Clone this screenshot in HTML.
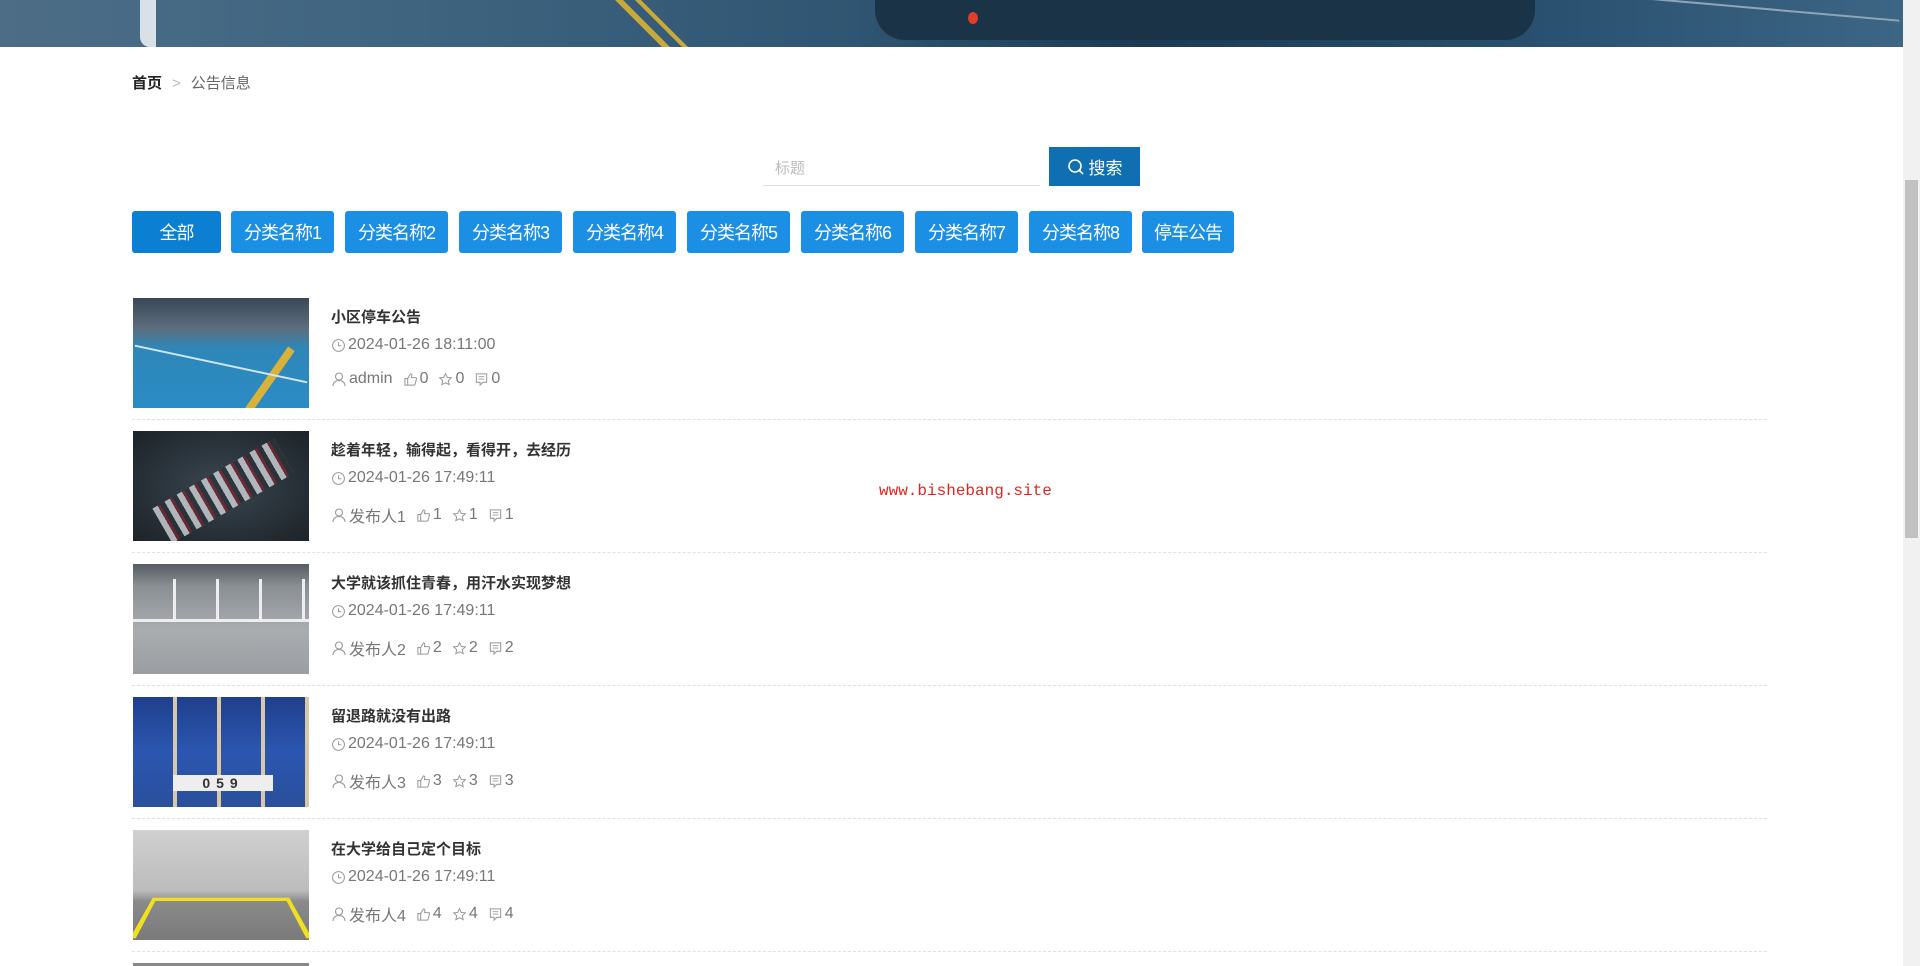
<!DOCTYPE html>
<html><head><meta charset="utf-8"><style>
*{margin:0;padding:0;box-sizing:border-box}
html,body{width:1920px;height:966px;overflow:hidden}
body{background:#fff;font-family:"Liberation Sans","Noto Sans CJK SC",sans-serif;position:relative}
.banner{position:absolute;left:0;top:0;width:1903px;height:47px;background:linear-gradient(90deg,#4d6d86 0%,#3f6581 20%,#2f5572 45%,#1c3a52 60%,#28506e 80%,#3d6684 100%);overflow:hidden}
.banner i{position:absolute;display:block}
.sb{position:absolute;right:0;top:0;width:17px;height:966px;background:#f1f1f1}
.sb .th{position:absolute;left:2px;width:13px;top:180px;height:358px;background:#c1c1c1}
.bc{position:absolute;left:132px;top:72px;font-size:15px;color:#333}
.bc b{font-weight:bold;color:#222}
.bc span{color:#bbb;margin:0 10px}
.bc em{font-style:normal;color:#666}
.inp{position:absolute;left:763px;top:147px;width:277px;height:39px;border-bottom:1px solid #ddd;font-size:15px;color:#bbb;padding:10px 0 0 12px}
.btn{position:absolute;left:1049px;top:147px;width:91px;height:39px;background:#0f6fb0;color:#fff;font-size:17px;display:flex;align-items:center;justify-content:center;gap:4px}
.cat{position:absolute;top:211px;height:42px;background:#1a8fe3;color:#fff;font-size:18px;border-radius:3px;display:flex;align-items:center;justify-content:center;letter-spacing:-1px}
.item{position:absolute;left:132px;width:1635px;height:133px}
.item .im{position:absolute;left:1px;top:0;width:176px;height:110px;overflow:hidden}
.item .t{position:absolute;left:199px;top:8px;font-size:15px;font-weight:bold;color:#333}
.item .d{position:absolute;left:199px;top:38px;font-size:16px;color:#777;display:flex;align-items:center;gap:2px}
.item .m{position:absolute;left:199px;top:72px;font-size:16px;color:#777;display:flex;align-items:center}
.item .m span{margin-right:10px;display:flex;align-items:center;gap:2px}
.item .ln{position:absolute;left:0;top:121px;width:1635px;border-top:1px dashed #e0e0e0}
svg{display:block}
.wm{position:absolute;left:879px;top:482px;font-family:"Liberation Mono",monospace;font-size:16px;color:#e0261f}
</style></head><body>
<div class="banner">
<i style="left:140px;top:0;width:16px;height:47px;background:#d8e0e8;border-radius:0 0 0 10px"></i>
<i style="left:615px;top:0;width:8px;height:60px;background:#c8a93a;transform:skewX(45deg);transform-origin:top"></i>
<i style="left:635px;top:0;width:6px;height:60px;background:#c8a93a;transform:skewX(45deg);transform-origin:top"></i>
<i style="left:875px;top:0;width:660px;height:40px;background:#1a3347;border-radius:0 0 30px 30px"></i>
<i style="left:968px;top:12px;width:10px;height:12px;background:#e23c2a;border-radius:50%"></i>
<i style="left:1540px;top:4px;width:360px;height:2px;background:#8fa6b8;transform:rotate(5deg)"></i>
</div>
<div class="sb"><div class="th"></div></div>

<div class="bc"><b>首页</b><span>&gt;</span><em>公告信息</em></div>
<div class="inp">标题</div>
<div class="btn"><svg width="18" height="18" viewBox="0 0 18 18"><circle cx="8" cy="8" r="6" fill="none" stroke="#fff" stroke-width="1.6"/><path d="M12.5 12.5L16 16" stroke="#fff" stroke-width="1.6"/></svg>搜索</div>

<div class="cat" style="left:132px;width:89px;background:#0b7fd1">全部</div>
<div class="cat" style="left:231px;width:103px">分类名称1</div>
<div class="cat" style="left:345px;width:103px">分类名称2</div>
<div class="cat" style="left:459px;width:103px">分类名称3</div>
<div class="cat" style="left:573px;width:103px">分类名称4</div>
<div class="cat" style="left:687px;width:103px">分类名称5</div>
<div class="cat" style="left:801px;width:103px">分类名称6</div>
<div class="cat" style="left:915px;width:103px">分类名称7</div>
<div class="cat" style="left:1029px;width:103px">分类名称8</div>
<div class="cat" style="left:1142px;width:92px">停车公告</div>

<div class="wm">www.bishebang.site</div>

<div class="item" style="top:298px">
<div class="im" style="background:linear-gradient(180deg,#3a4756 0%,#5d6e7e 28%,#2f86b8 45%,#2a8cc4 100%)"><div style="position:absolute;left:120px;top:40px;width:8px;height:120px;background:#d9b23a;transform:rotate(35deg)"></div><div style="position:absolute;left:0;top:65px;width:176px;height:2px;background:#cfe6f5;transform:rotate(12deg)"></div></div>
<div class="t">小区停车公告</div>
<div class="d">CLK2024-01-26 18:11:00</div>
<div class="m"><span>USRadmin</span><span>THU0</span><span>STR0</span><span>CMT0</span></div>
<div class="ln"></div></div>

<div class="item" style="top:431px">
<div class="im" style="background:radial-gradient(ellipse at 50% 50%,#3a4650,#1c2328)"><div style="position:absolute;left:20px;top:40px;width:140px;height:40px;background:repeating-linear-gradient(90deg,#cfd6dc 0 6px,#7b2530 6px 9px,#2a3238 9px 14px);transform:rotate(-30deg);opacity:.8"></div></div>
<div class="t">趁着年轻，输得起，看得开，去经历</div>
<div class="d">CLK2024-01-26 17:49:11</div>
<div class="m"><span>USR发布人1</span><span>THU1</span><span>STR1</span><span>CMT1</span></div>
<div class="ln"></div></div>

<div class="item" style="top:564px">
<div class="im" style="background:linear-gradient(180deg,#555b61 0%,#8a8f94 20%,#a9adb0 60%,#9a9ea2 100%)"><div style="position:absolute;left:0;top:55px;width:176px;height:3px;background:#eee"></div><div style="position:absolute;left:0;top:15px;width:176px;height:40px;background:repeating-linear-gradient(90deg,transparent 0 40px,#eee 40px 43px)"></div></div>
<div class="t">大学就该抓住青春，用汗水实现梦想</div>
<div class="d">CLK2024-01-26 17:49:11</div>
<div class="m"><span>USR发布人2</span><span>THU2</span><span>STR2</span><span>CMT2</span></div>
<div class="ln"></div></div>

<div class="item" style="top:697px">
<div class="im" style="background:linear-gradient(180deg,#1f3f8c 0%,#2b56b0 50%,#2a4f9c 100%)"><div style="position:absolute;left:0;top:0;width:176px;height:110px;background:repeating-linear-gradient(90deg,transparent 0 40px,#d9c8a8 40px 44px)"></div><div style="position:absolute;left:40px;top:78px;width:100px;height:16px;background:#eee;color:#333;font:bold 14px 'Liberation Sans';text-align:center;letter-spacing:6px">059</div></div>
<div class="t">留退路就没有出路</div>
<div class="d">CLK2024-01-26 17:49:11</div>
<div class="m"><span>USR发布人3</span><span>THU3</span><span>STR3</span><span>CMT3</span></div>
<div class="ln"></div></div>

<div class="item" style="top:830px">
<div class="im" style="background:linear-gradient(180deg,#d0d0d0 0%,#bcbcbc 55%,#8a8a8a 65%,#7a7a7a 100%)"><div style="position:absolute;left:10px;top:62px;width:156px;height:46px;border:5px solid #f0e020;border-bottom:none;transform:perspective(80px) rotateX(30deg)"></div></div>
<div class="t">在大学给自己定个目标</div>
<div class="d">CLK2024-01-26 17:49:11</div>
<div class="m"><span>USR发布人4</span><span>THU4</span><span>STR4</span><span>CMT4</span></div>
<div class="ln"></div></div>

<div class="item" style="top:963px;height:3px;overflow:hidden"><div class="im" style="background:#888;height:3px"></div></div>

<script>
var I={
CLK:'<svg width="15" height="15" viewBox="0 0 16 16"><circle cx="8" cy="8" r="6.3" fill="none" stroke="#999" stroke-width="1.1"/><path d="M8 4.5V8.3H11" fill="none" stroke="#999" stroke-width="1.1"/></svg>',
USR:'<svg width="16" height="16" viewBox="0 0 16 16"><circle cx="8" cy="5.5" r="3.5" fill="none" stroke="#999" stroke-width="1.1"/><path d="M2 15c0-3.5 2.7-5.5 6-5.5s6 2 6 5.5" fill="none" stroke="#999" stroke-width="1.1"/></svg>',
THU:'<svg width="15" height="15" viewBox="0 0 16 16"><path d="M2 7h3v7H2zM5 7l3-5c1.2 0 1.6.8 1.4 2L9 6h4.3c.8 0 1.3.7 1.1 1.4l-1.5 5.5c-.2.7-.7 1.1-1.4 1.1H5" fill="none" stroke="#999" stroke-width="1.1"/></svg>',
STR:'<svg width="15" height="15" viewBox="0 0 16 16"><path d="M8 1.8l1.9 4 4.3.5-3.2 2.9.9 4.3L8 11.4l-3.9 2.1.9-4.3L1.8 6.3l4.3-.5z" fill="none" stroke="#999" stroke-width="1.1"/></svg>',
CMT:'<svg width="15" height="15" viewBox="0 0 16 16"><path d="M2.5 2h11v9h-4l-3 3v-3h-4z" fill="none" stroke="#999" stroke-width="1.1"/><path d="M5 5h6M5 7.5h6" stroke="#999" stroke-width="1"/></svg>'};
document.querySelectorAll('.d,.m span').forEach(function(e){var h=e.innerHTML;for(var k in I)h=h.replace(k,I[k]);e.innerHTML=h;});
</script>
</body></html>
